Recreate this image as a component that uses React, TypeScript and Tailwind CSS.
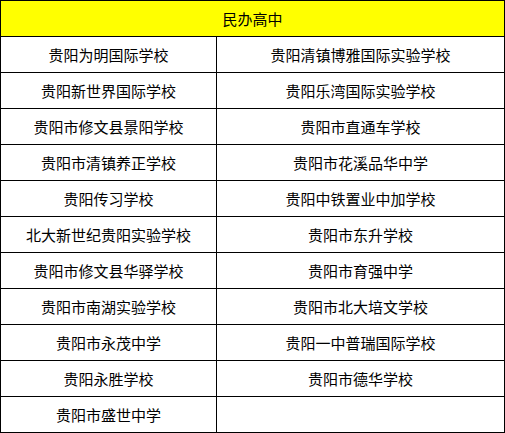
const rows: [string, string][] = [
  ["贵阳为明国际学校", "贵阳清镇博雅国际实验学校"],
  ["贵阳新世界国际学校", "贵阳乐湾国际实验学校"],
  ["贵阳市修文县景阳学校", "贵阳市直通车学校"],
  ["贵阳市清镇养正学校", "贵阳市花溪品华中学"],
  ["贵阳传习学校", "贵阳中铁置业中加学校"],
  ["北大新世纪贵阳实验学校", "贵阳市东升学校"],
  ["贵阳市修文县华驿学校", "贵阳市育强中学"],
  ["贵阳市南湖实验学校", "贵阳市北大培文学校"],
  ["贵阳市永茂中学", "贵阳一中普瑞国际学校"],
  ["贵阳永胜学校", "贵阳市德华学校"],
  ["贵阳市盛世中学", ""],
];

export default function App() {
  return (
    <div className="w-[505px] bg-white text-black text-[15px] leading-none font-['Noto_Sans_CJK_SC','Noto_Sans',sans-serif]">
      <div className="grid grid-cols-[216px_288px] border-l border-t border-black">
        <div className="col-span-2 h-9 flex items-center justify-center bg-[#ffff00] border-r border-b border-black">
          民办高中
        </div>
        {rows.map(([a, b], i) => (
          <div key={i} className="contents">
            <div className="h-9 flex items-center justify-center border-r border-b border-black">{a}</div>
            <div className="h-9 flex items-center justify-center border-r border-b border-black">{b}</div>
          </div>
        ))}
      </div>
    </div>
  );
}
